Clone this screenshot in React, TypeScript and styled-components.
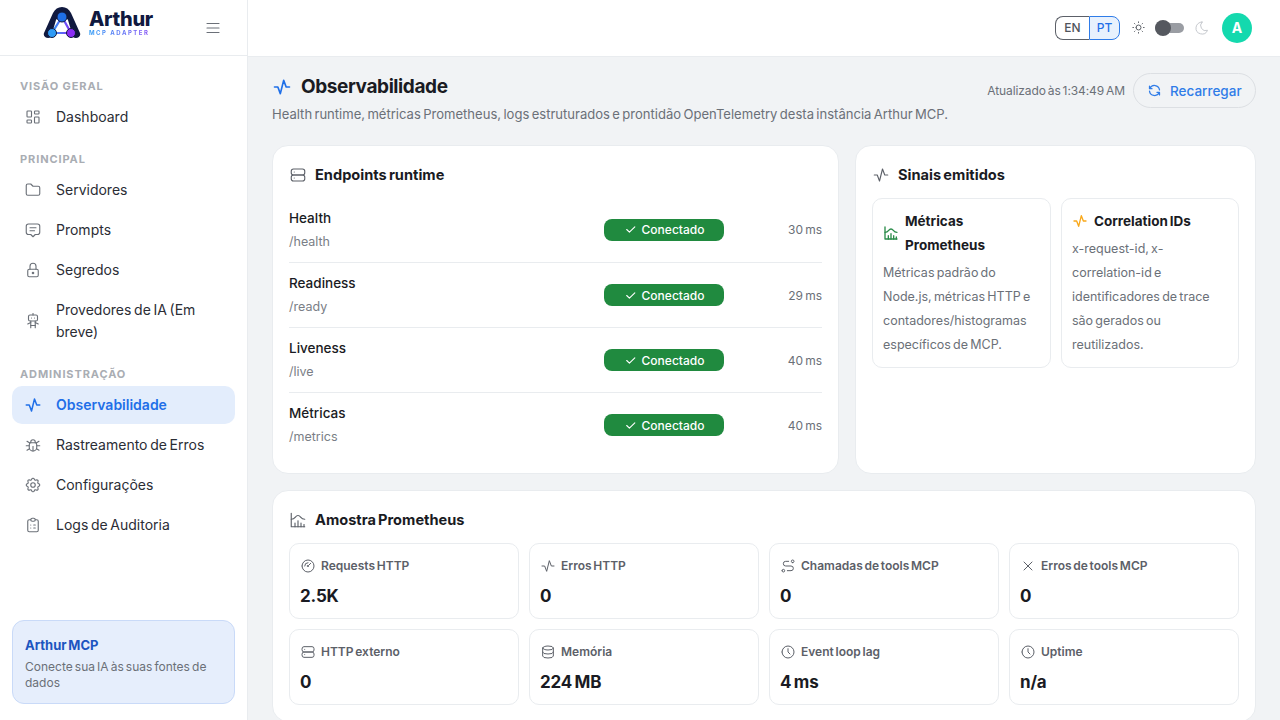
import type { ReactNode } from 'react'
import styled, { createGlobalStyle } from 'styled-components'
import {
  TbActivity,
  TbBug,
  TbChartHistogram,
  TbCheck,
  TbClipboardList,
  TbClock,
  TbDatabase,
  TbFolder,
  TbGauge,
  TbLayoutDashboard,
  TbLock,
  TbMenu2,
  TbMessage2,
  TbMoon,
  TbRefresh,
  TbRobot,
  TbRoute,
  TbServer,
  TbSettings,
  TbSun,
  TbX
} from 'react-icons/tb'

const GlobalStyle = createGlobalStyle`
  * {
    box-sizing: border-box;
  }

  html,
  body {
    height: 100%;
    margin: 0;
    overflow: hidden;
  }

  body {
    color: #1a1b23;
    font-family: Inter, "Open Sans", sans-serif;
    word-spacing: -0.08em;
  }
`

const Shell = styled.div`
  display: flex;
  height: 720px;
  overflow: hidden;
  width: 1280px;
`

const Sidebar = styled.aside`
  background-color: #fff;
  border-right: 1px solid #e9ecef;
  display: flex;
  flex-direction: column;
  flex-shrink: 0;
  width: 248px;
`

const Brand = styled.div`
  align-items: center;
  border-bottom: 1px solid #e9ecef;
  display: flex;
  height: 56px;
  justify-content: space-between;
  padding: 0 25px 0 43px;
`

const Logo = styled.div`
  align-items: center;
  display: flex;
  gap: 8px;
  margin-bottom: 9px;
`

const LogoWords = styled.div`
  display: flex;
  flex-direction: column;
`

const LogoName = styled.span`
  color: #10193f;
  font-size: 20px;
  font-weight: 800;
  letter-spacing: -0.3px;
  line-height: 19px;
`

const LogoTag = styled.span`
  background: linear-gradient(90deg, #2f9bf5, #8a4df5);
  background-clip: text;
  color: transparent;
  font-size: 6px;
  font-weight: 700;
  letter-spacing: 1.5px;
  line-height: 8px;
  word-spacing: 0;
  -webkit-background-clip: text;
`

const MenuButton = styled.button`
  background: transparent;
  border: 0;
  color: #6b7078;
  display: flex;
  padding: 0;

  svg {
    stroke-width: 1.5;
  }
`

const Nav = styled.nav`
  display: flex;
  flex: 1;
  flex-direction: column;
  padding: 23px 12px 0;
`

const NavGroup = styled.div`
  display: flex;
  flex-direction: column;
  gap: 2px;
  margin-bottom: 16px;
`

const GroupLabel = styled.div`
  color: #a9adb3;
  font-size: 11px;
  font-weight: 700;
  letter-spacing: 0.9px;
  line-height: 14px;
  margin-bottom: 3px;
  padding-left: 8px;
  word-spacing: 0;
`

const NavItem = styled.a<{ $active?: boolean }>`
  align-items: center;
  background-color: ${(p) => (p.$active ? '#e3edfc' : 'transparent')};
  border-radius: 10px;
  color: ${(p) => (p.$active ? '#1f6fe8' : '#2b2d35')};
  display: flex;
  font-size: 14px;
  font-weight: ${(p) => (p.$active ? 600 : 400)};
  gap: 14px;
  line-height: 22px;
  min-height: 38px;
  padding: 8px 12px;

  svg {
    color: ${(p) => (p.$active ? '#1f6fe8' : '#6b7078')};
    flex-shrink: 0;
    stroke-width: ${(p) => (p.$active ? 2 : 1.5)};
  }
`

const PromoCard = styled.div`
  background-color: #e6eefc;
  border: 1px solid #c9daf8;
  border-radius: 12px;
  height: 84px;
  margin: 0 12px 16px;
  padding: 15px 12px 0;
`

const PromoTitle = styled.div`
  color: #1c55c0;
  font-size: 13px;
  font-weight: 700;
  line-height: 18px;
`

const PromoText = styled.div`
  color: #6b7078;
  font-size: 12px;
  line-height: 16px;
  margin-top: 5px;
`

const Main = styled.div`
  background-color: #f1f3f5;
  display: flex;
  flex: 1;
  flex-direction: column;
  min-width: 0;
`

const TopBar = styled.header`
  align-items: center;
  background-color: #fff;
  border-bottom: 1px solid #e9ecef;
  display: flex;
  flex-shrink: 0;
  height: 57px;
  justify-content: flex-end;
  padding: 0 28px 1px 0;
`

const LangSwitch = styled.div`
  display: flex;
  margin-right: 11px;
`

const LangButton = styled.button<{ $active?: boolean }>`
  background-color: ${(p) => (p.$active ? '#e8f1fd' : '#fff')};
  border: 1px solid ${(p) => (p.$active ? '#2f7ce8' : '#5c6068')};
  border-radius: ${(p) => (p.$active ? '0 8px 8px 0' : '8px 0 0 8px')};
  border-right-width: ${(p) => (p.$active ? '1px' : '0')};
  color: ${(p) => (p.$active ? '#1f6fe8' : '#50545c')};
  font-family: inherit;
  font-size: 12px;
  font-weight: 500;
  height: 24px;
  padding: 0;
  width: ${(p) => (p.$active ? '31px' : '34px')};
`

const ThemeIcon = styled.span<{ $muted?: boolean }>`
  color: ${(p) => (p.$muted ? '#c6c9ce' : '#50545c')};
  display: flex;

  svg {
    stroke-width: 1.5;
  }
`

const ThemeSwitch = styled.div`
  background-color: #9a9da3;
  border-radius: 8px;
  height: 10px;
  margin: 0 10px 0 9px;
  position: relative;
  width: 29px;
`

const ThemeThumb = styled.span`
  background-color: #55585f;
  border-radius: 50%;
  height: 16px;
  left: 0;
  position: absolute;
  top: -3px;
  width: 16px;
`

const Avatar = styled.div`
  align-items: center;
  background-color: #14d9ae;
  border-radius: 50%;
  color: #fff;
  display: flex;
  font-size: 14px;
  font-weight: 700;
  height: 30px;
  justify-content: center;
  margin-left: 12px;
  width: 30px;
`

const Content = styled.main`
  display: flex;
  flex-direction: column;
  gap: 16px;
  padding: 16px 24px 0;
`

const PageHead = styled.div`
  align-items: flex-start;
  display: flex;
  height: 56px;
  justify-content: space-between;
`

const PageTitleBlock = styled.div`
  display: flex;
  flex-direction: column;
  gap: 3px;
  padding-top: 1px;
`

const PageTitle = styled.h1`
  align-items: center;
  display: flex;
  font-size: 19px;
  font-weight: 700;
  gap: 9px;
  letter-spacing: -0.4px;
  line-height: 26px;
  margin: 0;

  svg {
    color: #1f6fe8;
  }
`

const PageSubtitle = styled.p`
  color: #6b7078;
  font-size: 13.05px;
  line-height: 22px;
  margin: 0;
  white-space: nowrap;
`

const PageActions = styled.div`
  align-items: center;
  display: flex;
  flex-shrink: 0;
  gap: 8px;
`

const Updated = styled.span`
  color: #6b7078;
  font-size: 12px;
  letter-spacing: -0.1px;
  white-space: nowrap;
`

const ReloadButton = styled.button`
  align-items: center;
  background: transparent;
  border: 1px solid #dcdfe3;
  border-radius: 18px;
  color: #2f7ce8;
  display: flex;
  font-family: inherit;
  font-size: 13.5px;
  font-weight: 500;
  gap: 8px;
  height: 35px;
  padding: 0 13px;
  width: 123px;
`

const TopGrid = styled.div`
  display: grid;
  gap: 16px;
  grid-template-columns: 567px 401px;
`

const Card = styled.section`
  background-color: #fff;
  border: 1px solid #e9ecef;
  border-radius: 16px;
  padding: 17px 16px 16px;
`

const TallCard = styled(Card)`
  height: 329px;
`

const SampleCard = styled(Card)`
  height: 232px;
`

const CardTitle = styled.h2`
  align-items: center;
  display: flex;
  font-size: 14.6px;
  font-weight: 700;
  gap: 8px;
  height: 24px;
  line-height: 24px;
  margin: 0;

  svg {
    color: #5c6068;
    flex-shrink: 0;
    stroke-width: 1.5;
  }
`

const EndpointList = styled.div`
  display: flex;
  flex-direction: column;
  margin-top: 10px;
`

const EndpointRow = styled.div`
  align-items: center;
  border-top: 1px solid #e9ecef;
  display: grid;
  grid-template-columns: 315px 120px 1fr;
  height: 65px;

  &:first-child {
    border-top: 0;
  }
`

const EndpointName = styled.div`
  font-size: 13.5px;
  font-weight: 500;
  line-height: 22px;
`

const EndpointPath = styled.div`
  color: #7a7e86;
  font-size: 12.5px;
  line-height: 22px;
  margin-top: 2px;
`

const StatusBadge = styled.span`
  align-items: center;
  background-color: #208a3f;
  border-radius: 8px;
  color: #fff;
  display: flex;
  font-size: 12px;
  font-weight: 500;
  gap: 5px;
  height: 22px;
  justify-content: center;
`

const Latency = styled.span`
  color: #6b7078;
  font-size: 12px;
  text-align: right;
`

const SignalGrid = styled.div`
  display: grid;
  gap: 10px;
  grid-template-columns: 179px 178px;
  margin-top: 11px;
`

const SignalCard = styled.div`
  border: 1px solid #e9ecef;
  border-radius: 10px;
  height: 170px;
  padding: 10px 10px 0;
`

const SignalTitle = styled.div<{ $tone: string }>`
  align-items: center;
  display: flex;
  font-size: 13.5px;
  font-weight: 700;
  gap: 6px;
  line-height: 24px;
  margin-bottom: 4px;

  svg {
    color: ${(p) => p.$tone};
    flex-shrink: 0;
  }
`

const SignalText = styled.p`
  color: #6b7078;
  font-size: 12.5px;
  line-height: 24px;
  margin: 0;
`

const MetricGrid = styled.div`
  display: grid;
  gap: 10px;
  grid-template-columns: repeat(4, 230px);
  margin-top: 11px;
`

const MetricCard = styled.div`
  border: 1px solid #e9ecef;
  border-radius: 10px;
  height: 76px;
  padding: 13px 10px 0;
`

const MetricLabel = styled.div`
  align-items: center;
  color: #5c6068;
  display: flex;
  font-size: 12px;
  font-weight: 600;
  gap: 5px;
  line-height: 18px;

  svg {
    flex-shrink: 0;
    stroke-width: 1.5;
  }
`

const MetricValue = styled.div`
  font-size: 17px;
  font-weight: 700;
  letter-spacing: -0.2px;
  line-height: 24px;
  margin-top: 9px;
`

type NavEntry = { label: string; icon: ReactNode; active?: boolean }

const navGroups: { title: string; items: NavEntry[] }[] = [
  {
    title: 'VISÃO GERAL',
    items: [{ label: 'Dashboard', icon: <TbLayoutDashboard size={18} /> }]
  },
  {
    title: 'PRINCIPAL',
    items: [
      { label: 'Servidores', icon: <TbFolder size={18} /> },
      { label: 'Prompts', icon: <TbMessage2 size={18} /> },
      { label: 'Segredos', icon: <TbLock size={18} /> },
      { label: 'Provedores de IA (Em breve)', icon: <TbRobot size={18} /> }
    ]
  },
  {
    title: 'ADMINISTRAÇÃO',
    items: [
      { label: 'Observabilidade', icon: <TbActivity size={18} />, active: true },
      { label: 'Rastreamento de Erros', icon: <TbBug size={18} /> },
      { label: 'Configurações', icon: <TbSettings size={18} /> },
      { label: 'Logs de Auditoria', icon: <TbClipboardList size={18} /> }
    ]
  }
]

const endpoints = [
  { name: 'Health', path: '/health', latency: '30 ms' },
  { name: 'Readiness', path: '/ready', latency: '29 ms' },
  { name: 'Liveness', path: '/live', latency: '40 ms' },
  { name: 'Métricas', path: '/metrics', latency: '40 ms' }
]

const metrics = [
  { label: 'Requests HTTP', value: '2.5K', icon: <TbGauge size={16} /> },
  { label: 'Erros HTTP', value: '0', icon: <TbActivity size={16} /> },
  { label: 'Chamadas de tools MCP', value: '0', icon: <TbRoute size={16} /> },
  { label: 'Erros de tools MCP', value: '0', icon: <TbX size={16} /> },
  { label: 'HTTP externo', value: '0', icon: <TbServer size={16} /> },
  { label: 'Memória', value: '224 MB', icon: <TbDatabase size={16} /> },
  { label: 'Event loop lag', value: '4 ms', icon: <TbClock size={16} /> },
  { label: 'Uptime', value: 'n/a', icon: <TbClock size={16} /> }
]

const LogoMark = () => (
  <svg width="38" height="32" viewBox="0 0 38 32" fill="none">
    <defs>
      <linearGradient id="logoEdge" x1="9" y1="26" x2="29" y2="26" gradientUnits="userSpaceOnUse">
        <stop offset="0" stopColor="#2f9bf5" />
        <stop offset="1" stopColor="#8a2df5" />
      </linearGradient>
    </defs>
    <path
      d="M1 26L10 6C12 2 15 0 19 0C23 0 26 2 28 6L37 26C38.5 30 33 32.5 30 30L25 13C23 9 15 9 13 13L8 30C5 32.5 -0.5 30 1 26Z"
      fill="#10193f"
    />
    <path d="M9 26H28L19 10Z" stroke="url(#logoEdge)" strokeWidth="2.2" fill="#fff" />
    <circle cx="19" cy="10" r="5" fill="#1f6fe8" stroke="#10193f" strokeWidth="1" />
    <circle cx="9" cy="26" r="4.5" fill="#2f9bf5" stroke="#10193f" strokeWidth="1" />
    <circle cx="28" cy="26" r="4.5" fill="#8a2df5" stroke="#10193f" strokeWidth="1" />
  </svg>
)

export default function App() {
  return (
    <>
      <GlobalStyle />
      <Shell>
        <Sidebar>
          <Brand>
            <Logo>
              <LogoMark />
              <LogoWords>
                <LogoName>Arthur</LogoName>
                <LogoTag>MCP ADAPTER</LogoTag>
              </LogoWords>
            </Logo>
            <MenuButton type="button" aria-label="Menu">
              <TbMenu2 size={18} />
            </MenuButton>
          </Brand>
          <Nav>
            {navGroups.map((group) => (
              <NavGroup key={group.title}>
                <GroupLabel>{group.title}</GroupLabel>
                {group.items.map((item) => (
                  <NavItem key={item.label} $active={item.active}>
                    {item.icon}
                    <span>{item.label}</span>
                  </NavItem>
                ))}
              </NavGroup>
            ))}
          </Nav>
          <PromoCard>
            <PromoTitle>Arthur MCP</PromoTitle>
            <PromoText>Conecte sua IA às suas fontes de dados</PromoText>
          </PromoCard>
        </Sidebar>

        <Main>
          <TopBar>
            <LangSwitch>
              <LangButton type="button">EN</LangButton>
              <LangButton type="button" $active>
                PT
              </LangButton>
            </LangSwitch>
            <ThemeIcon>
              <TbSun size={15} />
            </ThemeIcon>
            <ThemeSwitch>
              <ThemeThumb />
            </ThemeSwitch>
            <ThemeIcon $muted>
              <TbMoon size={16} />
            </ThemeIcon>
            <Avatar>A</Avatar>
          </TopBar>

          <Content>
            <PageHead>
              <PageTitleBlock>
                <PageTitle>
                  <TbActivity size={20} />
                  Observabilidade
                </PageTitle>
                <PageSubtitle>
                  Health runtime, métricas Prometheus, logs estruturados e prontidão OpenTelemetry desta
                  instância Arthur MCP.
                </PageSubtitle>
              </PageTitleBlock>
              <PageActions>
                <Updated>Atualizado às 1:34:49 AM</Updated>
                <ReloadButton type="button">
                  <TbRefresh size={15} />
                  Recarregar
                </ReloadButton>
              </PageActions>
            </PageHead>

            <TopGrid>
              <TallCard>
                <CardTitle>
                  <TbServer size={18} />
                  Endpoints runtime
                </CardTitle>
                <EndpointList>
                  {endpoints.map((endpoint) => (
                    <EndpointRow key={endpoint.path}>
                      <div>
                        <EndpointName>{endpoint.name}</EndpointName>
                        <EndpointPath>{endpoint.path}</EndpointPath>
                      </div>
                      <StatusBadge>
                        <TbCheck size={13} />
                        Conectado
                      </StatusBadge>
                      <Latency>{endpoint.latency}</Latency>
                    </EndpointRow>
                  ))}
                </EndpointList>
              </TallCard>

              <TallCard>
                <CardTitle>
                  <TbActivity size={18} />
                  Sinais emitidos
                </CardTitle>
                <SignalGrid>
                  <SignalCard>
                    <SignalTitle $tone="#2a8c4a">
                      <TbChartHistogram size={16} />
                      <span>Métricas Prometheus</span>
                    </SignalTitle>
                    <SignalText>
                      Métricas padrão do Node.js, métricas HTTP e contadores/histogramas específicos de MCP.
                    </SignalText>
                  </SignalCard>
                  <SignalCard>
                    <SignalTitle $tone="#f9a81a">
                      <TbActivity size={16} />
                      <span>Correlation IDs</span>
                    </SignalTitle>
                    <SignalText>
                      x-request-id, x-correlation-id e identificadores de trace são gerados ou reutilizados.
                    </SignalText>
                  </SignalCard>
                </SignalGrid>
              </TallCard>
            </TopGrid>

            <SampleCard>
              <CardTitle>
                <TbChartHistogram size={18} />
                Amostra Prometheus
              </CardTitle>
              <MetricGrid>
                {metrics.map((metric) => (
                  <MetricCard key={metric.label}>
                    <MetricLabel>
                      {metric.icon}
                      {metric.label}
                    </MetricLabel>
                    <MetricValue>{metric.value}</MetricValue>
                  </MetricCard>
                ))}
              </MetricGrid>
            </SampleCard>
          </Content>
        </Main>
      </Shell>
    </>
  )
}
